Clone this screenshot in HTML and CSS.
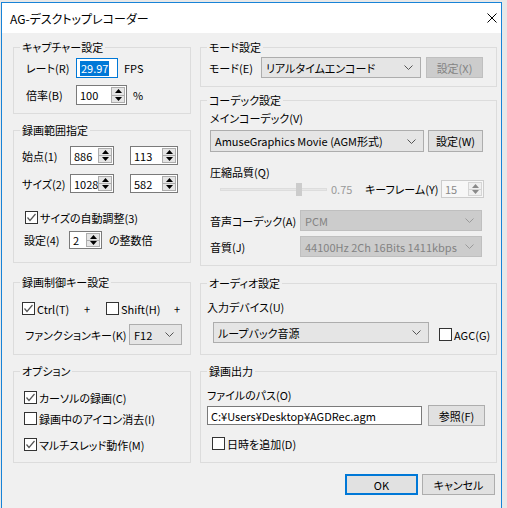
FILE: index.html
```html
<!DOCTYPE html>
<html lang="ja">
<head>
<meta charset="utf-8">
<title>AG-デスクトップレコーダー</title>
<link rel="stylesheet" href="styles.css">
</head>
<body>
<div class="window">
  <div class="titlebar">
    <span class="title">AG-デスクトップレコーダー</span>
    <svg class="close" width="10" height="10" viewBox="0 0 10 10"><path d="M0.5 0.5 L9.5 9.5 M9.5 0.5 L0.5 9.5" stroke="#000" stroke-width="1" fill="none"/></svg>
  </div>
  <div class="client">
    <div class="columns">
      <div class="col col-left">
        <div class="group g-capture">
          <div class="gtitle">キャプチャー設定</div>
          <div class="row cap-rate">
            <span class="lbl w50">レート(R)</span>
            <div class="edit focus w42"><span class="sel">29.97</span></div>
            <span class="unit">FPS</span>
          </div>
          <div class="row cap-scale">
            <span class="lbl w50">倍率(B)</span>
            <div class="spin w51">
              <span class="val">100</span>
              <div class="spinbtns">
                <div class="sb"><svg width="7" height="4" viewBox="0 0 7 4"><path d="M3.5 0 L7 4 L0 4 Z" fill="#000"/></svg></div>
                <div class="sb"><svg width="7" height="4" viewBox="0 0 7 4"><path d="M0 0 L7 0 L3.5 4 Z" fill="#000"/></svg></div>
              </div>
            </div>
            <span class="unit">%</span>
          </div>
        </div>

        <div class="group g-range">
          <div class="gtitle">録画範囲指定</div>
          <div class="row range-start">
            <span class="lbl w48">始点(1)</span>
            <div class="spin w44">
              <span class="val">886</span>
              <div class="spinbtns">
                <div class="sb"><svg width="7" height="4" viewBox="0 0 7 4"><path d="M3.5 0 L7 4 L0 4 Z" fill="#000"/></svg></div>
                <div class="sb"><svg width="7" height="4" viewBox="0 0 7 4"><path d="M0 0 L7 0 L3.5 4 Z" fill="#000"/></svg></div>
              </div>
            </div>
            <div class="spin w48 ml16">
              <span class="val">113</span>
              <div class="spinbtns">
                <div class="sb"><svg width="7" height="4" viewBox="0 0 7 4"><path d="M3.5 0 L7 4 L0 4 Z" fill="#000"/></svg></div>
                <div class="sb"><svg width="7" height="4" viewBox="0 0 7 4"><path d="M0 0 L7 0 L3.5 4 Z" fill="#000"/></svg></div>
              </div>
            </div>
          </div>
          <div class="row range-size">
            <span class="lbl w48">サイズ(2)</span>
            <div class="spin w44">
              <span class="val">1028</span>
              <div class="spinbtns">
                <div class="sb"><svg width="7" height="4" viewBox="0 0 7 4"><path d="M3.5 0 L7 4 L0 4 Z" fill="#000"/></svg></div>
                <div class="sb"><svg width="7" height="4" viewBox="0 0 7 4"><path d="M0 0 L7 0 L3.5 4 Z" fill="#000"/></svg></div>
              </div>
            </div>
            <div class="spin w48 ml16">
              <span class="val">582</span>
              <div class="spinbtns">
                <div class="sb"><svg width="7" height="4" viewBox="0 0 7 4"><path d="M3.5 0 L7 4 L0 4 Z" fill="#000"/></svg></div>
                <div class="sb"><svg width="7" height="4" viewBox="0 0 7 4"><path d="M0 0 L7 0 L3.5 4 Z" fill="#000"/></svg></div>
              </div>
            </div>
          </div>
          <div class="row range-auto">
            <span class="cb checked"><svg width="11" height="11" viewBox="0 0 11 11"><path d="M1.5 5.5 L4 8.5 L9.5 2" stroke="#555" stroke-width="1.2" fill="none"/></svg></span>
            <span class="cbl">サイズの自動調整(3)</span>
          </div>
          <div class="row range-mult">
            <span class="lbl w45">設定(4)</span>
            <div class="spin w33">
              <span class="val">2</span>
              <div class="spinbtns">
                <div class="sb"><svg width="7" height="4" viewBox="0 0 7 4"><path d="M3.5 0 L7 4 L0 4 Z" fill="#000"/></svg></div>
                <div class="sb"><svg width="7" height="4" viewBox="0 0 7 4"><path d="M0 0 L7 0 L3.5 4 Z" fill="#000"/></svg></div>
              </div>
            </div>
            <span class="unit ml7">の整数倍</span>
          </div>
        </div>

        <div class="group g-keys">
          <div class="gtitle">録画制御キー設定</div>
          <div class="row keys-mod">
            <span class="cb checked"><svg width="11" height="11" viewBox="0 0 11 11"><path d="M1.5 5.5 L4 8.5 L9.5 2" stroke="#555" stroke-width="1.2" fill="none"/></svg></span>
            <span class="cbl w47">Ctrl(T)</span>
            <span class="plus w22">+</span>
            <span class="cb"></span>
            <span class="cbl w53">Shift(H)</span>
            <span class="plus">+</span>
          </div>
          <div class="row keys-fn">
            <span class="lbl w104">ファンクションキー(K)</span>
            <div class="combo w53"><span class="val">F12</span><svg class="chev" width="9" height="5" viewBox="0 0 9 5"><path d="M0.5 0.5 L4.5 4.5 L8.5 0.5" stroke="#555" stroke-width="1" fill="none"/></svg></div>
          </div>
        </div>

        <div class="group g-options">
          <div class="gtitle">オプション</div>
          <div class="row opt1">
            <span class="cb checked"><svg width="11" height="11" viewBox="0 0 11 11"><path d="M1.5 5.5 L4 8.5 L9.5 2" stroke="#555" stroke-width="1.2" fill="none"/></svg></span>
            <span class="cbl">カーソルの録画(C)</span>
          </div>
          <div class="row opt2">
            <span class="cb"></span>
            <span class="cbl">録画中のアイコン消去(I)</span>
          </div>
          <div class="row opt3">
            <span class="cb checked"><svg width="11" height="11" viewBox="0 0 11 11"><path d="M1.5 5.5 L4 8.5 L9.5 2" stroke="#555" stroke-width="1.2" fill="none"/></svg></span>
            <span class="cbl">マルチスレッド動作(M)</span>
          </div>
        </div>
      </div>

      <div class="col col-right">
        <div class="group g-mode">
          <div class="gtitle">モード設定</div>
          <div class="row mode-row">
            <span class="lbl w52">モード(E)</span>
            <div class="combo w160"><span class="val">リアルタイムエンコード</span><svg class="chev" width="9" height="5" viewBox="0 0 9 5"><path d="M0.5 0.5 L4.5 4.5 L8.5 0.5" stroke="#555" stroke-width="1" fill="none"/></svg></div>
            <div class="btn disabled w57 ml5">設定(X)</div>
          </div>
        </div>

        <div class="group g-codec">
          <div class="gtitle">コーデック設定</div>
          <div class="line codec-main">メインコーデック(V)</div>
          <div class="row codec-sel">
            <div class="combo w214 h22"><span class="val">AmuseGraphics Movie (AGM形式)</span><svg class="chev" width="9" height="5" viewBox="0 0 9 5"><path d="M0.5 0.5 L4.5 4.5 L8.5 0.5" stroke="#555" stroke-width="1" fill="none"/></svg></div>
            <div class="btn w55 h22 ml4">設定(W)</div>
          </div>
          <div class="line codec-q">圧縮品質(Q)</div>
          <div class="row codec-slider">
            <div class="slider">
              <div class="track"></div>
              <div class="thumb"></div>
            </div>
            <span class="dis w34">0.75</span>
            <span class="lbl w76">キーフレーム(Y)</span>
            <div class="spin disabled w43">
              <span class="val">15</span>
              <div class="spinbtns">
                <div class="sb"><svg width="7" height="4" viewBox="0 0 7 4"><path d="M3.5 0 L7 4 L0 4 Z" fill="#8a8a8a"/></svg></div>
                <div class="sb"><svg width="7" height="4" viewBox="0 0 7 4"><path d="M0 0 L7 0 L3.5 4 Z" fill="#8a8a8a"/></svg></div>
              </div>
            </div>
          </div>
          <div class="row codec-audio">
            <span class="lbl w90">音声コーデック(A)</span>
            <div class="combo disabled w182"><span class="val">PCM</span><svg class="chev" width="9" height="5" viewBox="0 0 9 5"><path d="M0.5 0.5 L4.5 4.5 L8.5 0.5" stroke="#9a9a9a" stroke-width="1" fill="none"/></svg></div>
          </div>
          <div class="row codec-quality">
            <span class="lbl w90">音質(J)</span>
            <div class="combo disabled w182"><span class="val">44100Hz 2Ch 16Bits 1411kbps</span><svg class="chev" width="9" height="5" viewBox="0 0 9 5"><path d="M0.5 0.5 L4.5 4.5 L8.5 0.5" stroke="#9a9a9a" stroke-width="1" fill="none"/></svg></div>
          </div>
        </div>

        <div class="group g-audio">
          <div class="gtitle">オーディオ設定</div>
          <div class="line audio-dev">入力デバイス(U)</div>
          <div class="row audio-sel">
            <div class="combo w216"><span class="val">ループバック音源</span><svg class="chev" width="9" height="5" viewBox="0 0 9 5"><path d="M0.5 0.5 L4.5 4.5 L8.5 0.5" stroke="#555" stroke-width="1" fill="none"/></svg></div>
            <span class="cb ml10 agc"></span>
            <span class="cbl">AGC(G)</span>
          </div>
        </div>

        <div class="group g-output">
          <div class="gtitle">録画出力</div>
          <div class="line out-path">ファイルのパス(O)</div>
          <div class="row out-file">
            <div class="edit w215"><span class="val">C:¥Users¥Desktop¥AGDRec.agm</span></div>
            <div class="btn w57 ml6">参照(F)</div>
          </div>
          <div class="row out-date">
            <span class="cb"></span>
            <span class="cbl">日時を追加(D)</span>
          </div>
        </div>
      </div>
    </div>

    <div class="buttons">
      <div class="btn default">OK</div>
      <div class="btn">キャンセル</div>
    </div>
  </div>
</div>
</body>
</html>
```

FILE: styles.css
```css
html, body {
  margin: 0;
  padding: 0;
}
body {
  background: #e8e8e8;
  width: 507px;
  height: 508px;
  overflow: hidden;
  font-family: "Noto Sans CJK JP", "Noto Sans", sans-serif;
  font-size: 11px;
  color: #000;
  font-feature-settings: "palt";
}
.window {
  margin: 2px 0 0 1px;
  width: 501px;
  height: 520px;
  box-sizing: border-box;
  border: 1px solid #1883d7;
  border-bottom: none;
  background: #f0f0f0;
}
.titlebar {
  height: 30px;
  background: #fff;
  display: flex;
  align-items: center;
  justify-content: space-between;
  padding: 0 4px 0 8px;
}
.title {
  font-size: 12px;
}
.close {
  display: block;
}
.client {
  background: #f0f0f0;
}
.columns {
  display: flex;
  gap: 9px;
  padding-left: 11px;
  align-items: flex-start;
}
.col {
  display: flex;
  flex-direction: column;
}
.col-left { width: 178px; }
.col-right { width: 297px; }

.group {
  box-sizing: border-box;
  border: 1px solid #dcdcdc;
}
.gtitle {
  margin: -9px 0 0 6px;
  padding: 0 2px;
  background: #f0f0f0;
  line-height: 16px;
  height: 16px;
  width: fit-content;
  white-space: nowrap;
}
.g-capture { margin-top: 14px; height: 67px; }
.g-range { margin-top: 16px; height: 133px; }
.g-keys { margin-top: 19px; height: 73px; }
.g-options { margin-top: 16px; height: 92px; }

.g-mode { margin-top: 14px; height: 40px; }
.g-codec { margin-top: 13px; height: 166px; }
.g-audio { margin-top: 17px; height: 72px; }
.g-output { margin-top: 16px; height: 92px; }

.row {
  display: flex;
  align-items: center;
  white-space: nowrap;
}
.line {
  line-height: 16px;
  height: 16px;
  white-space: nowrap;
}
.lbl, .unit, .cbl, .plus, .dis { display: block; flex: none; }
.dis { color: #9a9a9a; }

/* capture */
.g-capture .row { padding-left: 12px; }
.cap-rate { margin-top: 3px; height: 20px; }
.cap-scale { margin-top: 7px; height: 20px; }
.unit { margin-left: 6px; }

/* range */
.g-range .row { padding-left: 8px; }
.range-start { margin-top: 8px; height: 19px; }
.range-size { margin-top: 9px; height: 19px; }
.g-range .range-auto { margin-top: 18px; height: 13px; padding-left: 11px; }
.g-range .range-mult { margin-top: 7px; height: 18px; padding-left: 10px; }

/* keys */
.keys-mod { margin-top: 12px; height: 13px; padding-left: 8px; }
.keys-fn { margin-top: 9px; height: 21px; padding-left: 11px; }

/* options */
.g-options .row { padding-left: 10px; height: 13px; }
.opt1 { margin-top: 12px; }
.opt2 { margin-top: 8px; }
.opt3 { margin-top: 13px; }

/* mode */
.mode-row { margin-top: 2px; height: 21px; padding-left: 8px; }

/* codec */
.g-codec .row, .g-codec .line { padding-left: 9px; }
.codec-main { margin-top: 2px; }
.codec-sel { margin-top: 4px; height: 22px; }
.codec-q { margin-top: 13px; line-height: 14px; height: 14px; }
.codec-slider { margin-top: 1px; height: 18px; }
.codec-audio { margin-top: 12px; height: 21px; }
.codec-quality { margin-top: 5px; height: 21px; }

/* audio */
.audio-dev { margin-top: 8px; padding-left: 6px; }
.audio-sel { margin-top: 7px; height: 21px; padding-left: 12px; }
.agc { margin-top: 4px; }
.g-audio .cbl { margin-top: 4px; }

/* output */
.out-path { margin-top: 8px; padding-left: 6px; }
.out-file { margin-top: 2px; height: 21px; padding-left: 6px; }
.out-date { margin-top: 11px; height: 13px; padding-left: 11px; }

/* widths */
.w22 { width: 22px; }
.w33 { width: 33px; }
.w34 { width: 34px; }
.w42 { width: 42px; }
.w43 { width: 43px; }
.w44 { width: 44px; }
.w45 { width: 45px; }
.w47 { width: 47px; }
.w48 { width: 48px; }
.w50 { width: 50px; }
.w51 { width: 51px; }
.w52 { width: 52px; }
.w53 { width: 53px; }
.w55 { width: 55px; }
.w57 { width: 57px; }
.w76 { width: 76px; }
.w90 { width: 90px; }
.w104 { width: 104px; }
.w160 { width: 160px; }
.w182 { width: 182px; }
.w214 { width: 214px; }
.w215 { width: 215px; }
.w216 { width: 216px; }
.h22 { height: 22px !important; }
.ml4 { margin-left: 4px; }
.ml5 { margin-left: 5px; }
.ml6 { margin-left: 6px; }
.ml7 { margin-left: 7px; }
.ml10 { margin-left: 10px; }
.ml16 { margin-left: 16px; }

/* edit */
.edit {
  box-sizing: border-box;
  height: 19px;
  border: 1px solid #7a7a7a;
  background: #fff;
  display: flex;
  align-items: center;
  padding-left: 3px;
  flex: none;
  overflow: hidden;
}
.edit.focus {
  height: 20px;
  border-color: #0078d7;
}
.sel {
  background: #0078d7;
  color: #fff;
  line-height: 15px;
  padding: 0 1px;
}

/* spin */
.spin {
  box-sizing: border-box;
  height: 100%;
  border: 1px solid #7a7a7a;
  background: #fff;
  display: flex;
  align-items: center;
  justify-content: space-between;
  padding-left: 3px;
  flex: none;
}
.spinbtns {
  width: 15px;
  height: 100%;
  display: flex;
  flex-direction: column;
  box-sizing: border-box;
  padding: 1px 1px 1px 0;
}
.sb {
  flex: 1;
  box-sizing: border-box;
  border: 1px solid #adadad;
  background: #e5e5e5;
  display: flex;
  align-items: center;
  justify-content: center;
}
.sb + .sb { border-top: none; }
.spin.disabled {
  border-color: #cccccc;
  background: #f7f7f7;
  color: #8a8a8a;
}
.spin.disabled .sb {
  border-color: #d5d5d5;
  background: #f0f0f0;
}

/* combo */
.combo {
  box-sizing: border-box;
  height: 21px;
  border: 1px solid #adadad;
  background: #e5e5e5;
  display: flex;
  align-items: center;
  justify-content: space-between;
  padding: 0 7px 0 4px;
  flex: none;
  overflow: hidden;
}
.combo.disabled {
  background: #cccccc;
  border-color: #bfbfbf;
  color: #838383;
}
.chev { display: block; flex: none; }

/* buttons */
.btn {
  box-sizing: border-box;
  height: 21px;
  border: 1px solid #adadad;
  background: #e1e1e1;
  display: flex;
  align-items: center;
  justify-content: center;
  flex: none;
}
.btn.disabled {
  background: #cccccc;
  border-color: #bfbfbf;
  color: #838383;
}
.btn.default {
  border: 2px solid #0078d7;
}

/* checkbox */
.cb {
  box-sizing: border-box;
  width: 13px;
  height: 13px;
  border: 1px solid #333;
  background: #fff;
  display: flex;
  align-items: center;
  justify-content: center;
  flex: none;
}
.cb svg { display: block; }
.cbl { margin-left: 2px; }

/* slider */
.slider {
  position: relative;
  width: 107px;
  height: 18px;
  margin-left: 10px;
  margin-right: 4px;
  flex: none;
}
.track {
  position: absolute;
  left: 0;
  right: 0;
  top: 8px;
  height: 3px;
  box-sizing: border-box;
  border: 1px solid #dddddd;
  background: #e7e7e7;
}
.thumb {
  position: absolute;
  left: 76px;
  top: 3px;
  width: 6px;
  height: 13px;
  background: #cccccc;
}

/* bottom buttons */
.buttons {
  display: flex;
  justify-content: flex-end;
  gap: 4px;
  margin-top: 11px;
  padding-right: 6px;
}
.buttons .btn {
  width: 73px;
  height: 21px;
}
```
